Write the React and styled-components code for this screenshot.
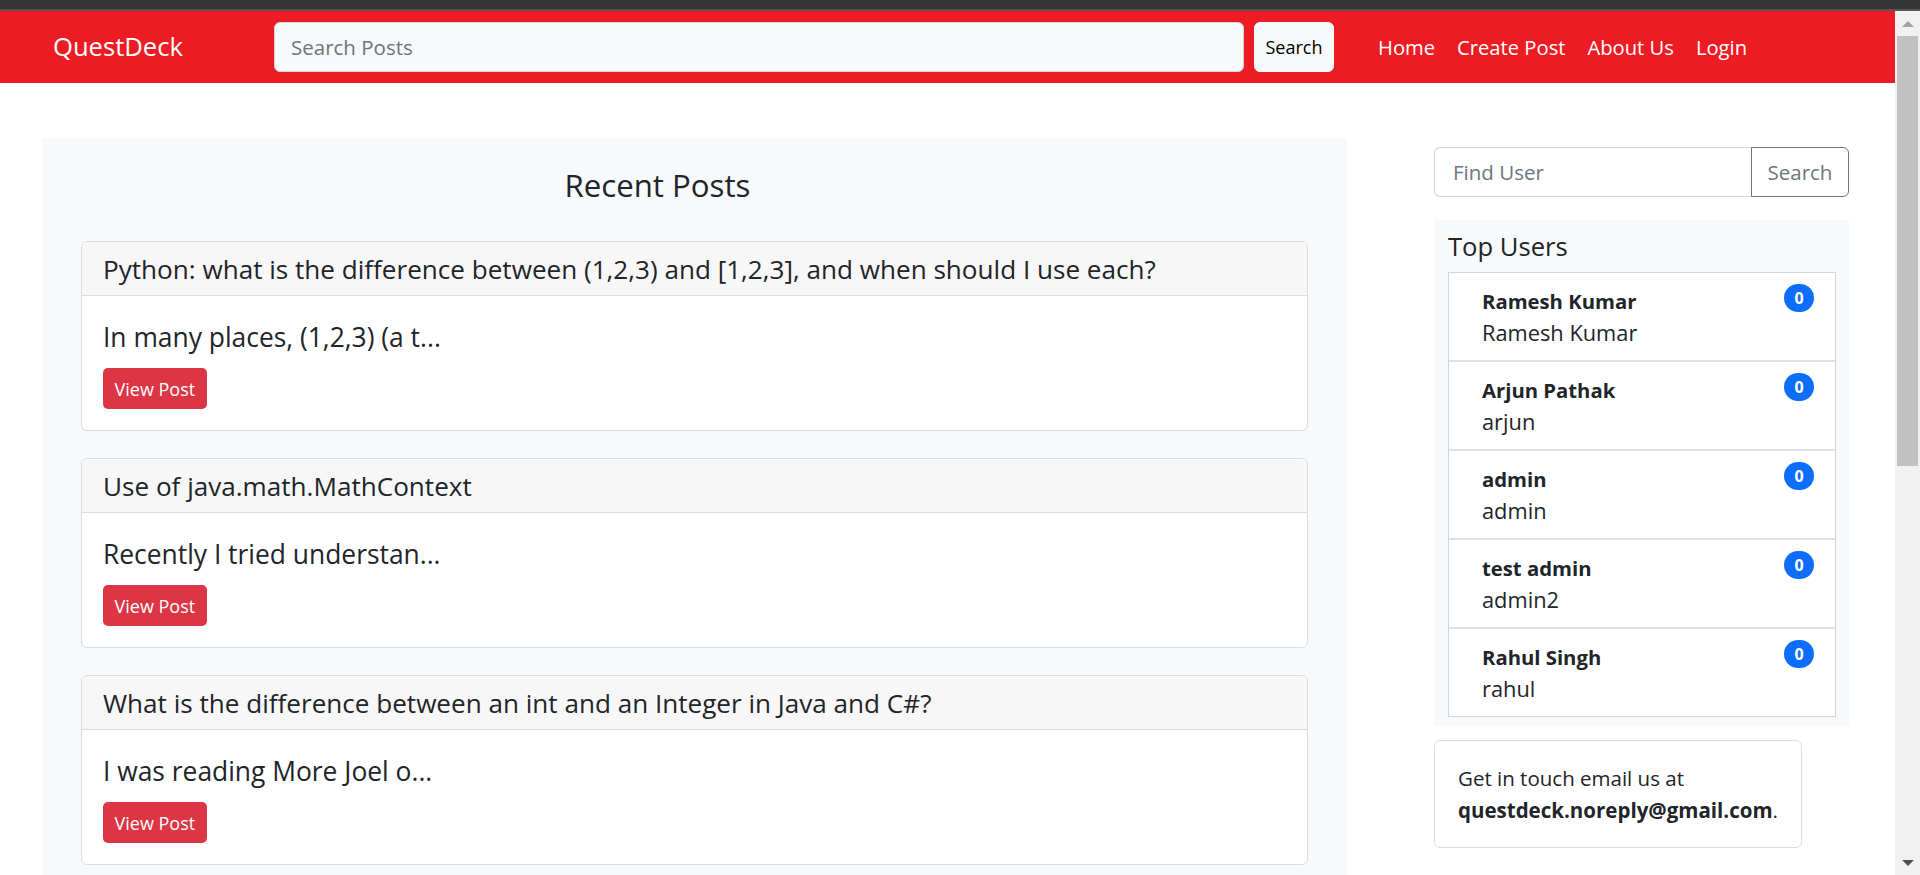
import React from "react";
import styled, { createGlobalStyle } from "styled-components";

const GlobalStyle = createGlobalStyle`
  * { box-sizing: border-box; }
  html, body { margin: 0; padding: 0; overflow: hidden; }
  body {
    font-family: "Open Sans", "Liberation Sans", sans-serif;
    color: #212529;
    background: #fff;
  }
`;

const Shell = styled.div`
  height: 875px;
  display: flex;
  flex-direction: column;
  overflow: hidden;
`;

const ChromeStrip = styled.div`
  flex: none;
  height: 11px;
  background: #353535;
  border-bottom: 2px solid #565656;
`;

const Viewport = styled.div`
  flex: 1;
  min-height: 0;
  display: flex;
`;

const Page = styled.div`
  flex: 1;
  min-width: 0;
  overflow: hidden;
`;

const ScrollTrack = styled.div`
  flex: none;
  width: 25px;
  background: #f1f1f1;
  display: flex;
  flex-direction: column;
  align-items: center;
`;

const ArrowBox = styled.div`
  height: 25px;
  width: 100%;
  display: flex;
  align-items: center;
  justify-content: center;
  margin-top: ${(p) => (p.down ? "auto" : "0")};
`;

const Arrow = styled.span`
  width: 0;
  height: 0;
  border-left: 6px solid transparent;
  border-right: 6px solid transparent;
  ${(p) =>
    p.down ? "border-top: 6px solid #505050;" : "border-bottom: 6px solid #a3a3a3;"}
`;

const Thumb = styled.div`
  width: 21px;
  height: 430px;
  background: #c1c1c1;
`;

/* navbar */
const Navbar = styled.nav`
  height: 72px;
  background: #ed1c24;
  display: flex;
  align-items: center;
  padding-left: 53px;
`;

const Brand = styled.a`
  flex: 0 0 221px;
  color: #fff;
  font-size: 25.6px;
  line-height: 32px;
  text-decoration: none;
`;

const SearchForm = styled.form`
  display: flex;
  gap: 10px;
  margin: 0;
`;

const NavInput = styled.input`
  width: 970px;
  height: 50px;
  border: 1px solid #ced4da;
  border-radius: 6px;
  background: #f8f9fa;
  padding: 0 16px;
  font-family: inherit;
  font-size: 20.5px;
  color: #212529;
  &::placeholder { color: #6c757d; }
`;

const NavButton = styled.button`
  width: 80px;
  height: 50px;
  border: 1px solid #f8f9fa;
  border-radius: 6px;
  background: #f8f9fa;
  color: #000;
  font-family: inherit;
  font-size: 18px;
`;

const NavList = styled.ul`
  display: flex;
  list-style: none;
  margin: 0 0 0 33px;
  padding: 0;
`;

const NavLink = styled.a`
  display: block;
  padding: 0 11px;
  color: #fff;
  font-size: 20.2px;
  line-height: 32px;
  text-decoration: none;
`;

/* main */
const Main = styled.main`
  display: flex;
  align-items: flex-start;
  gap: 87px;
  padding: 55px 46px 0 42px;
`;

const PostsPanel = styled.section`
  flex: 0 0 1305px;
  background: #f8f9fa;
  padding: 28px 39px 40px;
`;

const PanelTitle = styled.h2`
  margin: 0 0 37px;
  padding-right: 74px;
  text-align: center;
  font-size: 31.2px;
  line-height: 38px;
  font-weight: 500;
`;

const Card = styled.article`
  background: #fff;
  border: 1px solid #dcdcdc;
  border-radius: 6px;
  margin-bottom: 27px;
  overflow: hidden;
`;

const CardHeader = styled.div`
  background: #f7f7f7;
  border-bottom: 1px solid #dcdcdc;
  padding: 11px 21px 10px;
`;

const CardTitle = styled.h5`
  margin: 0;
  font-size: 26.1px;
  line-height: 32px;
  font-weight: 500;
  white-space: nowrap;
`;

const CardBody = styled.div`
  padding: 21px;
`;

const Excerpt = styled.p`
  margin: 0 0 11px;
  font-size: 26.4px;
  line-height: 40px;
  font-weight: 500;
`;

const DangerButton = styled.button`
  height: 41px;
  padding: 0 11.5px;
  border: none;
  border-radius: 5px;
  background: #dc3545;
  color: #fff;
  font-family: inherit;
  font-size: 18px;
`;

/* sidebar */
const Sidebar = styled.aside`
  flex: 0 0 415px;
  margin-top: 9px;
`;

const InputGroup = styled.form`
  display: flex;
  height: 50px;
  margin: 0;
`;

const UserInput = styled.input`
  flex: 1;
  min-width: 0;
  border: 1px solid #ced4da;
  border-right: none;
  border-radius: 6px 0 0 6px;
  padding: 0 18px;
  font-family: inherit;
  font-size: 20.5px;
  &::placeholder { color: #6c757d; }
`;

const OutlineButton = styled.button`
  width: 98px;
  border: 1px solid #6c757d;
  border-radius: 0 6px 6px 0;
  background: transparent;
  color: #6c757d;
  font-family: inherit;
  font-size: 20.5px;
`;

const UsersBox = styled.section`
  margin-top: 23px;
  background: #f8f9fa;
  padding: 11px 13px 9px 14px;
`;

const BoxTitle = styled.h5`
  margin: 0 0 9px;
  font-size: 25.6px;
  line-height: 32px;
  font-weight: 500;
`;

const UserList = styled.ul`
  list-style: none;
  margin: 0;
  padding: 0;
  border: 1px solid #d6d6d6;
  background: #fff;
`;

const UserItem = styled.li`
  display: flex;
  justify-content: space-between;
  align-items: flex-start;
  padding: 12px 21px 11px 33px;
  border-top: 2px solid #e0e0e0;
  &:first-child { border-top: none; }
`;

const UserText = styled.div`
  font-size: 21.8px;
  line-height: 32px;
`;

const UserName = styled.div`
  font-size: 20.3px;
  font-weight: 700;
`;

const Badge = styled.span`
  min-width: 30px;
  height: 28px;
  margin-top: -1px;
  border-radius: 14px;
  background: #0d6efd;
  color: #fff;
  font-size: 16px;
  font-weight: 700;
  line-height: 28px;
  text-align: center;
`;

const ContactCard = styled.div`
  width: 368px;
  margin-top: 14px;
  border: 1px solid #dcdcdc;
  border-radius: 6px;
  padding: 21px 23px;
  font-size: 20.5px;
  line-height: 32px;
`;

const posts = [
  {
    title:
      "Python: what is the difference between (1,2,3) and [1,2,3], and when should I use each?",
    excerpt: "In many places, (1,2,3) (a t...",
  },
  { title: "Use of java.math.MathContext", excerpt: "Recently I tried understan..." },
  {
    title: "What is the difference between an int and an Integer in Java and C#?",
    excerpt: "I was reading More Joel o...",
  },
];

const users = [
  { name: "Ramesh Kumar", username: "Ramesh Kumar", count: 0 },
  { name: "Arjun Pathak", username: "arjun", count: 0 },
  { name: "admin", username: "admin", count: 0 },
  { name: "test admin", username: "admin2", count: 0 },
  { name: "Rahul Singh", username: "rahul", count: 0 },
];

export default function App() {
  return (
    <Shell>
      <GlobalStyle />
      <ChromeStrip />
      <Viewport>
        <Page>
          <Navbar>
            <Brand href="#">QuestDeck</Brand>
            <SearchForm onSubmit={(e) => e.preventDefault()}>
              <NavInput placeholder="Search Posts" />
              <NavButton type="submit">Search</NavButton>
            </SearchForm>
            <NavList>
              <li><NavLink href="#">Home</NavLink></li>
              <li><NavLink href="#">Create Post</NavLink></li>
              <li><NavLink href="#">About Us</NavLink></li>
              <li><NavLink href="#">Login</NavLink></li>
            </NavList>
          </Navbar>

          <Main>
            <PostsPanel>
              <PanelTitle>Recent Posts</PanelTitle>
              {posts.map((post) => (
                <Card key={post.title}>
                  <CardHeader>
                    <CardTitle>{post.title}</CardTitle>
                  </CardHeader>
                  <CardBody>
                    <Excerpt>{post.excerpt}</Excerpt>
                    <DangerButton>View Post</DangerButton>
                  </CardBody>
                </Card>
              ))}
            </PostsPanel>

            <Sidebar>
              <InputGroup onSubmit={(e) => e.preventDefault()}>
                <UserInput placeholder="Find User" />
                <OutlineButton type="submit">Search</OutlineButton>
              </InputGroup>

              <UsersBox>
                <BoxTitle>Top Users</BoxTitle>
                <UserList>
                  {users.map((u) => (
                    <UserItem key={u.name}>
                      <UserText>
                        <UserName>{u.name}</UserName>
                        {u.username}
                      </UserText>
                      <Badge>{u.count}</Badge>
                    </UserItem>
                  ))}
                </UserList>
              </UsersBox>

              <ContactCard>
                Get in touch email us at <b>questdeck.noreply@gmail.com</b>.
              </ContactCard>
            </Sidebar>
          </Main>
        </Page>
        <ScrollTrack>
          <ArrowBox><Arrow /></ArrowBox>
          <Thumb />
          <ArrowBox down><Arrow down /></ArrowBox>
        </ScrollTrack>
      </Viewport>
    </Shell>
  );
}
